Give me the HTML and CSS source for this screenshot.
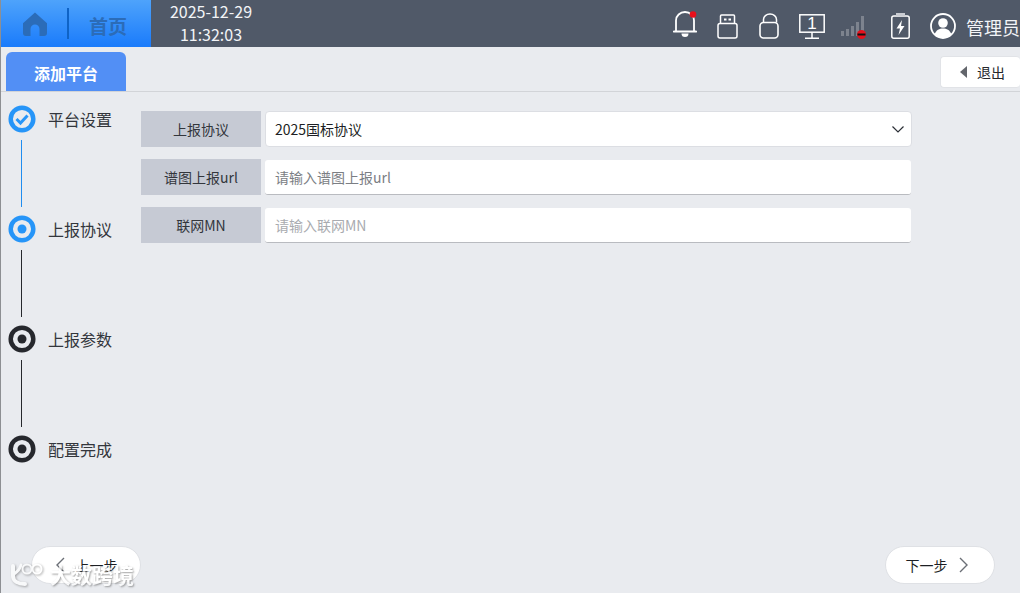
FILE: index.html
```html
<!DOCTYPE html>
<html lang="zh-CN">
<head>
<meta charset="utf-8">
<title>添加平台</title>
<link rel="stylesheet" href="styles.css">
</head>
<body>
<div class="app">
  <header class="topbar">
    <div class="home">
      <svg class="home-icon" viewBox="0 0 24 24" width="24" height="24"><path fill="currentColor" d="M12 .5 0 11.200V21a3 3 0 0 0 3 3h4.500v-7a4.500 4.500 0 0 1 9 0v7H21a3 3 0 0 0 3-3v-9.800z"/></svg>
      <span class="home-sep"></span>
      <span class="home-text">首页</span>
    </div>
    <div class="clock"><span>2025-12-29</span><span>11:32:03</span></div>
    <div class="status">
      <svg class="ic ic-bell" width="24" height="26" viewBox="0 0 24 26"><path d="M3 20V9.500a9 8.500 0 0 1 18 0V20" fill="none" stroke="#fff" stroke-width="1.800"/><path d="M1 20.500h22" stroke="#fff" stroke-width="2.200" stroke-linecap="round"/><path d="M8.500 22.500h7a3.500 3.500 0 0 1-7 0z" fill="#fff"/><circle cx="20" cy="3.500" r="3.300" fill="#e8101c"/></svg>
      <svg class="ic ic-usb" width="21" height="25" viewBox="0 0 21 25"><path d="M3.500 9.500V2a1 1 0 0 1 1-1h12a1 1 0 0 1 1 1v7.500" fill="none" stroke="#fff" stroke-width="1.500"/><rect x="1" y="9.500" width="19" height="14.500" rx="2" fill="none" stroke="#fff" stroke-width="1.500"/><rect x="7" y="4.500" width="2.500" height="2" fill="#fff"/><rect x="11.500" y="4.500" width="2.500" height="2" fill="#fff"/></svg>
      <svg class="ic ic-lock" width="20" height="26" viewBox="0 0 20 26"><path d="M4.500 9.500V6.500a6.500 5.500 0 0 1 13 0v3" fill="none" stroke="#fff" stroke-width="1.500"/><rect x="1" y="9.500" width="18" height="15.500" rx="3.500" fill="none" stroke="#fff" stroke-width="1.600"/></svg>
      <div class="ic monitor">
        <span class="monitor-num">1</span>
        <svg width="26" height="25" viewBox="0 0 26 25"><rect x=".8" y=".8" width="24.400" height="17.400" fill="none" stroke="#fff" stroke-width="1.500"/><path d="M13 18v6M6 24.200h14" stroke="#fff" stroke-width="1.500"/></svg>
      </div>
      <svg class="ic ic-signal" width="25" height="23" viewBox="0 0 25 23"><g fill="#7d838e"><rect x="0" y="15" width="3" height="5"/><rect x="5" y="13" width="3" height="7"/><rect x="10" y="10" width="3" height="10"/><rect x="15" y="6" width="3" height="14"/><rect x="20" y="0" width="3" height="20"/></g><circle cx="20.500" cy="18.500" r="4.500" fill="#e8101c"/><rect x="16.500" y="17.500" width="8" height="2" fill="#111"/></svg>
      <svg class="ic ic-batt" width="19" height="26" viewBox="0 0 19 26"><rect x=".8" y="3" width="17.400" height="22.200" rx="2" fill="none" stroke="#fff" stroke-width="1.500"/><rect x="5" y="0" width="9" height="3" fill="#c9ccd2"/><path d="M11 7 5.500 15.500H9L7.500 22l6-9H10z" fill="#fff"/></svg>
      <svg class="ic ic-user" width="26" height="26" viewBox="0 0 26 26"><circle cx="13" cy="13" r="12" fill="none" stroke="#fff" stroke-width="1.800"/><circle cx="13" cy="10" r="4.800" fill="#fff"/><path d="M4.500 21.500c1.500-4.500 5-6 8.500-6s7 1.500 8.500 6a12 12 0 0 1-17 0z" fill="#fff"/></svg>
      <span class="username">管理员</span>
    </div>
  </header>

  <div class="tabbar">
    <div class="tab">添加平台</div>
    <button class="exit" type="button"><span class="exit-arrow"></span>退出</button>
  </div>

  <main class="content">
    <ol class="steps">
      <li class="step done">
        <div class="step-row">
          <svg class="step-icon" width="28" height="28" viewBox="0 0 28 28"><circle cx="14" cy="14" r="11.300" fill="none" stroke="#2695f8" stroke-width="4.500"/><path d="M8.500 14l4 4 7-7.500" fill="none" stroke="#2695f8" stroke-width="3"/></svg>
          <span class="step-label">平台设置</span>
        </div>
        <span class="step-line"></span>
      </li>
      <li class="step current">
        <div class="step-row">
          <svg class="step-icon" width="28" height="28" viewBox="0 0 28 28"><circle cx="14" cy="14" r="11.300" fill="none" stroke="#2695f8" stroke-width="4.500"/><circle cx="14" cy="14" r="4.500" fill="#2695f8"/></svg>
          <span class="step-label">上报协议</span>
        </div>
        <span class="step-line"></span>
      </li>
      <li class="step">
        <div class="step-row">
          <svg class="step-icon" width="28" height="28" viewBox="0 0 28 28"><circle cx="14" cy="14" r="11.300" fill="none" stroke="#26282d" stroke-width="4.500"/><circle cx="14" cy="14" r="4.500" fill="#26282d"/></svg>
          <span class="step-label">上报参数</span>
        </div>
        <span class="step-line"></span>
      </li>
      <li class="step">
        <div class="step-row">
          <svg class="step-icon" width="28" height="28" viewBox="0 0 28 28"><circle cx="14" cy="14" r="11.300" fill="none" stroke="#26282d" stroke-width="4.500"/><circle cx="14" cy="14" r="4.500" fill="#26282d"/></svg>
          <span class="step-label">配置完成</span>
        </div>
      </li>
    </ol>

    <form class="form">
      <div class="field">
        <label class="field-label">上报协议</label>
        <div class="select">
          <span>2025国标协议</span>
          <svg width="12" height="7" viewBox="0 0 12 7"><path d="M.5.5 6 6 11.500.5" fill="none" stroke="#2b2f36" stroke-width="1.200"/></svg>
        </div>
      </div>
      <div class="field">
        <label class="field-label">谱图上报url</label>
        <div class="input strong">请输入谱图上报url</div>
      </div>
      <div class="field">
        <label class="field-label">联网MN</label>
        <div class="input">请输入联网MN</div>
      </div>
    </form>
  </main>

  <footer class="footer">
    <button class="nav-btn prev" type="button">
      <svg width="10" height="16" viewBox="0 0 10 16"><path d="M9 1 2 8l7 7" fill="none" stroke="#6b6f76" stroke-width="1.400"/></svg>
      上一步
    </button>
    <button class="nav-btn next" type="button">
      下一步
      <svg width="10" height="16" viewBox="0 0 10 16"><path d="m1 1 7 7-7 7" fill="none" stroke="#6b6f76" stroke-width="1.400"/></svg>
    </button>
  </footer>

  <div class="watermark">
    <svg class="watermark-logo" width="36" height="24" viewBox="0 0 36 24"><path d="M3 4v10c0 5 5 8 12 8" fill="none" stroke="#fff" stroke-width="4" stroke-linecap="round"/><path d="M4 12c3-2 6-5 7-9" fill="none" stroke="#fff" stroke-width="3" stroke-linecap="round"/><circle cx="17" cy="7" r="4.500" fill="none" stroke="#fff" stroke-width="2"/><circle cx="27" cy="7" r="4.500" fill="none" stroke="#fff" stroke-width="2"/></svg>
    <span class="watermark-text">大数跨境</span>
  </div>
</div>
</body>
</html>
```
FILE: styles.css
```css
* { box-sizing: border-box; }
html, body { margin: 0; height: 100%; }
body {
  font-family: "Noto Sans CJK SC", "Noto Sans", sans-serif;
  background: #e9ebef;
  color: #33363c;
  overflow: hidden;
}
.app {
  position: relative;
  width: 1020px;
  height: 593px;
  display: flex;
  flex-direction: column;
  border-left: 1px solid #8d8f93;
}
.topbar {
  height: 47px;
  flex: none;
  display: flex;
  align-items: center;
  background: #505968;
}
.home {
  width: 150px;
  height: 47px;
  flex: none;
  display: flex;
  align-items: center;
  padding-left: 22px;
  background: linear-gradient(#4ea3fb, #1a7bfb);
  color: #2b6cb8;
}
.home-icon { flex: none; margin-top: 1px; }
.home-sep {
  width: 2px;
  height: 31px;
  margin-left: 20px;
  background: #0f63c6;
}
.home-text {
  margin-left: 20px;
  font-size: 19px;
  font-weight: 700;
  line-height: 47px;
  margin-top: 3px;
}
.clock {
  width: 120px;
  flex: none;
  display: flex;
  flex-direction: column;
  align-items: center;
  color: #f2f4f7;
  font-size: 16px;
  line-height: 23px;
  margin-top: -1px;
}
.status {
  margin-left: auto;
  display: flex;
  align-items: flex-end;
  height: 47px;
  padding-bottom: 8px;
}
.ic { display: block; flex: none; }
.ic-bell { margin-right: 20px; margin-bottom: 2px; }
.ic-usb { margin-right: 21px; }
.ic-lock { margin-right: 20px; }
.monitor { position: relative; height: 25px; margin-right: 16px; }
.monitor svg { display: block; }
.monitor-num {
  position: absolute;
  left: 0;
  right: 0;
  top: 0;
  text-align: center;
  color: #fff;
  font: 17px/19px "Liberation Sans", sans-serif;
}
.ic-signal { margin-right: 25px; }
.ic-batt { margin-right: 20px; }
.ic-user { margin-right: 10px; }
.username { color: #f2f4f7; font-size: 18px; line-height: 24px; white-space: nowrap; width: 54px; }

.tabbar {
  height: 45px;
  flex: none;
  display: flex;
  align-items: flex-start;
  justify-content: space-between;
  padding: 5px 0 0 5px;
  border-bottom: 1px solid #d2d4d8;
}
.tab {
  width: 120px;
  height: 39px;
  background: #528ff5;
  color: #fff;
  border-radius: 6px 6px 0 0;
  font-size: 16px;
  font-weight: 700;
  line-height: 42px;
  text-align: center;
}
.exit {
  width: 80px;
  height: 32px;
  margin-top: 4px;
  border: 1px solid #e1e3e7;
  border-right: 0;
  border-radius: 4px;
  background: #fff;
  color: #26282d;
  font: 14px/30px "Noto Sans CJK SC", sans-serif;
  display: flex;
  align-items: center;
  padding: 0 0 0 19px;
}
.exit-arrow {
  width: 0;
  height: 0;
  margin-right: 10px;
  border-style: solid;
  border-width: 6px 7px 6px 0;
  border-color: transparent #63666c transparent transparent;
}

.content {
  flex: 1;
  display: flex;
  align-items: flex-start;
  min-height: 0;
}
.steps {
  list-style: none;
  margin: 0;
  padding: 13px 0 0 7px;
  width: 140px;
  flex: none;
}
.step { height: 110px; position: relative; }
.step-row {
  display: flex;
  align-items: center;
  height: 28px;
}
.step-icon { flex: none; }
.step-label {
  margin-left: 12px;
  font-size: 16px;
  line-height: 28px;
  color: #33363c;
}
.step-line {
  display: block;
  width: 1px;
  height: 67px;
  margin: 7px 0 0 13px;
  background: #26282d;
}
.step.done .step-line { background: #1f8df0; }

.form {
  display: flex;
  flex-direction: column;
  gap: 12px;
  padding-top: 19px;
  width: 771px;
}
.field {
  display: flex;
  height: 36px;
  gap: 4px;
}
.field-label {
  width: 120px;
  flex: none;
  background: #c6cad4;
  font-size: 14px;
  color: #33363c;
  line-height: 36px;
  text-align: center;
}
.select {
  flex: 1;
  display: flex;
  align-items: center;
  justify-content: space-between;
  background: #fff;
  border: 1px solid #dcdee3;
  border-radius: 4px;
  padding: 0 7px 0 9px;
  font-size: 14px;
  color: #1d1f24;
}
.input {
  flex: 1;
  margin: 1px 1px 0 0;
  background: #fff;
  border-bottom: 1px solid #b9bbc0;
  border-radius: 3px;
  padding-left: 10px;
  font-size: 14px;
  line-height: 34px;
  color: #a9abb0;
}
.input.strong { color: #7b7e84; }

.footer {
  flex: none;
  display: flex;
  justify-content: space-between;
  padding: 0 25px 9px 30px;
}
.nav-btn {
  width: 110px;
  height: 38px;
  display: flex;
  align-items: center;
  justify-content: center;
  gap: 11px;
  background: #fff;
  border: 1px solid #dfe1e5;
  border-radius: 19px;
  color: #1d1f24;
  font: 14px/36px "Noto Sans CJK SC", sans-serif;
}
.nav-btn.next { padding-right: 12px; }
.watermark {
  position: absolute;
  left: 9px;
  bottom: 7px;
  display: flex;
  align-items: flex-end;
  gap: 4px;
  opacity: 0.72;
}
.watermark-logo { filter: drop-shadow(1px 1px 1px rgba(70, 70, 70, 0.6)); }
.watermark-text {
  color: #fff;
  font-size: 21px;
  font-weight: 700;
  line-height: 24px;
  text-shadow: 1px 1px 2px rgba(70, 70, 70, 0.7);
}
```
